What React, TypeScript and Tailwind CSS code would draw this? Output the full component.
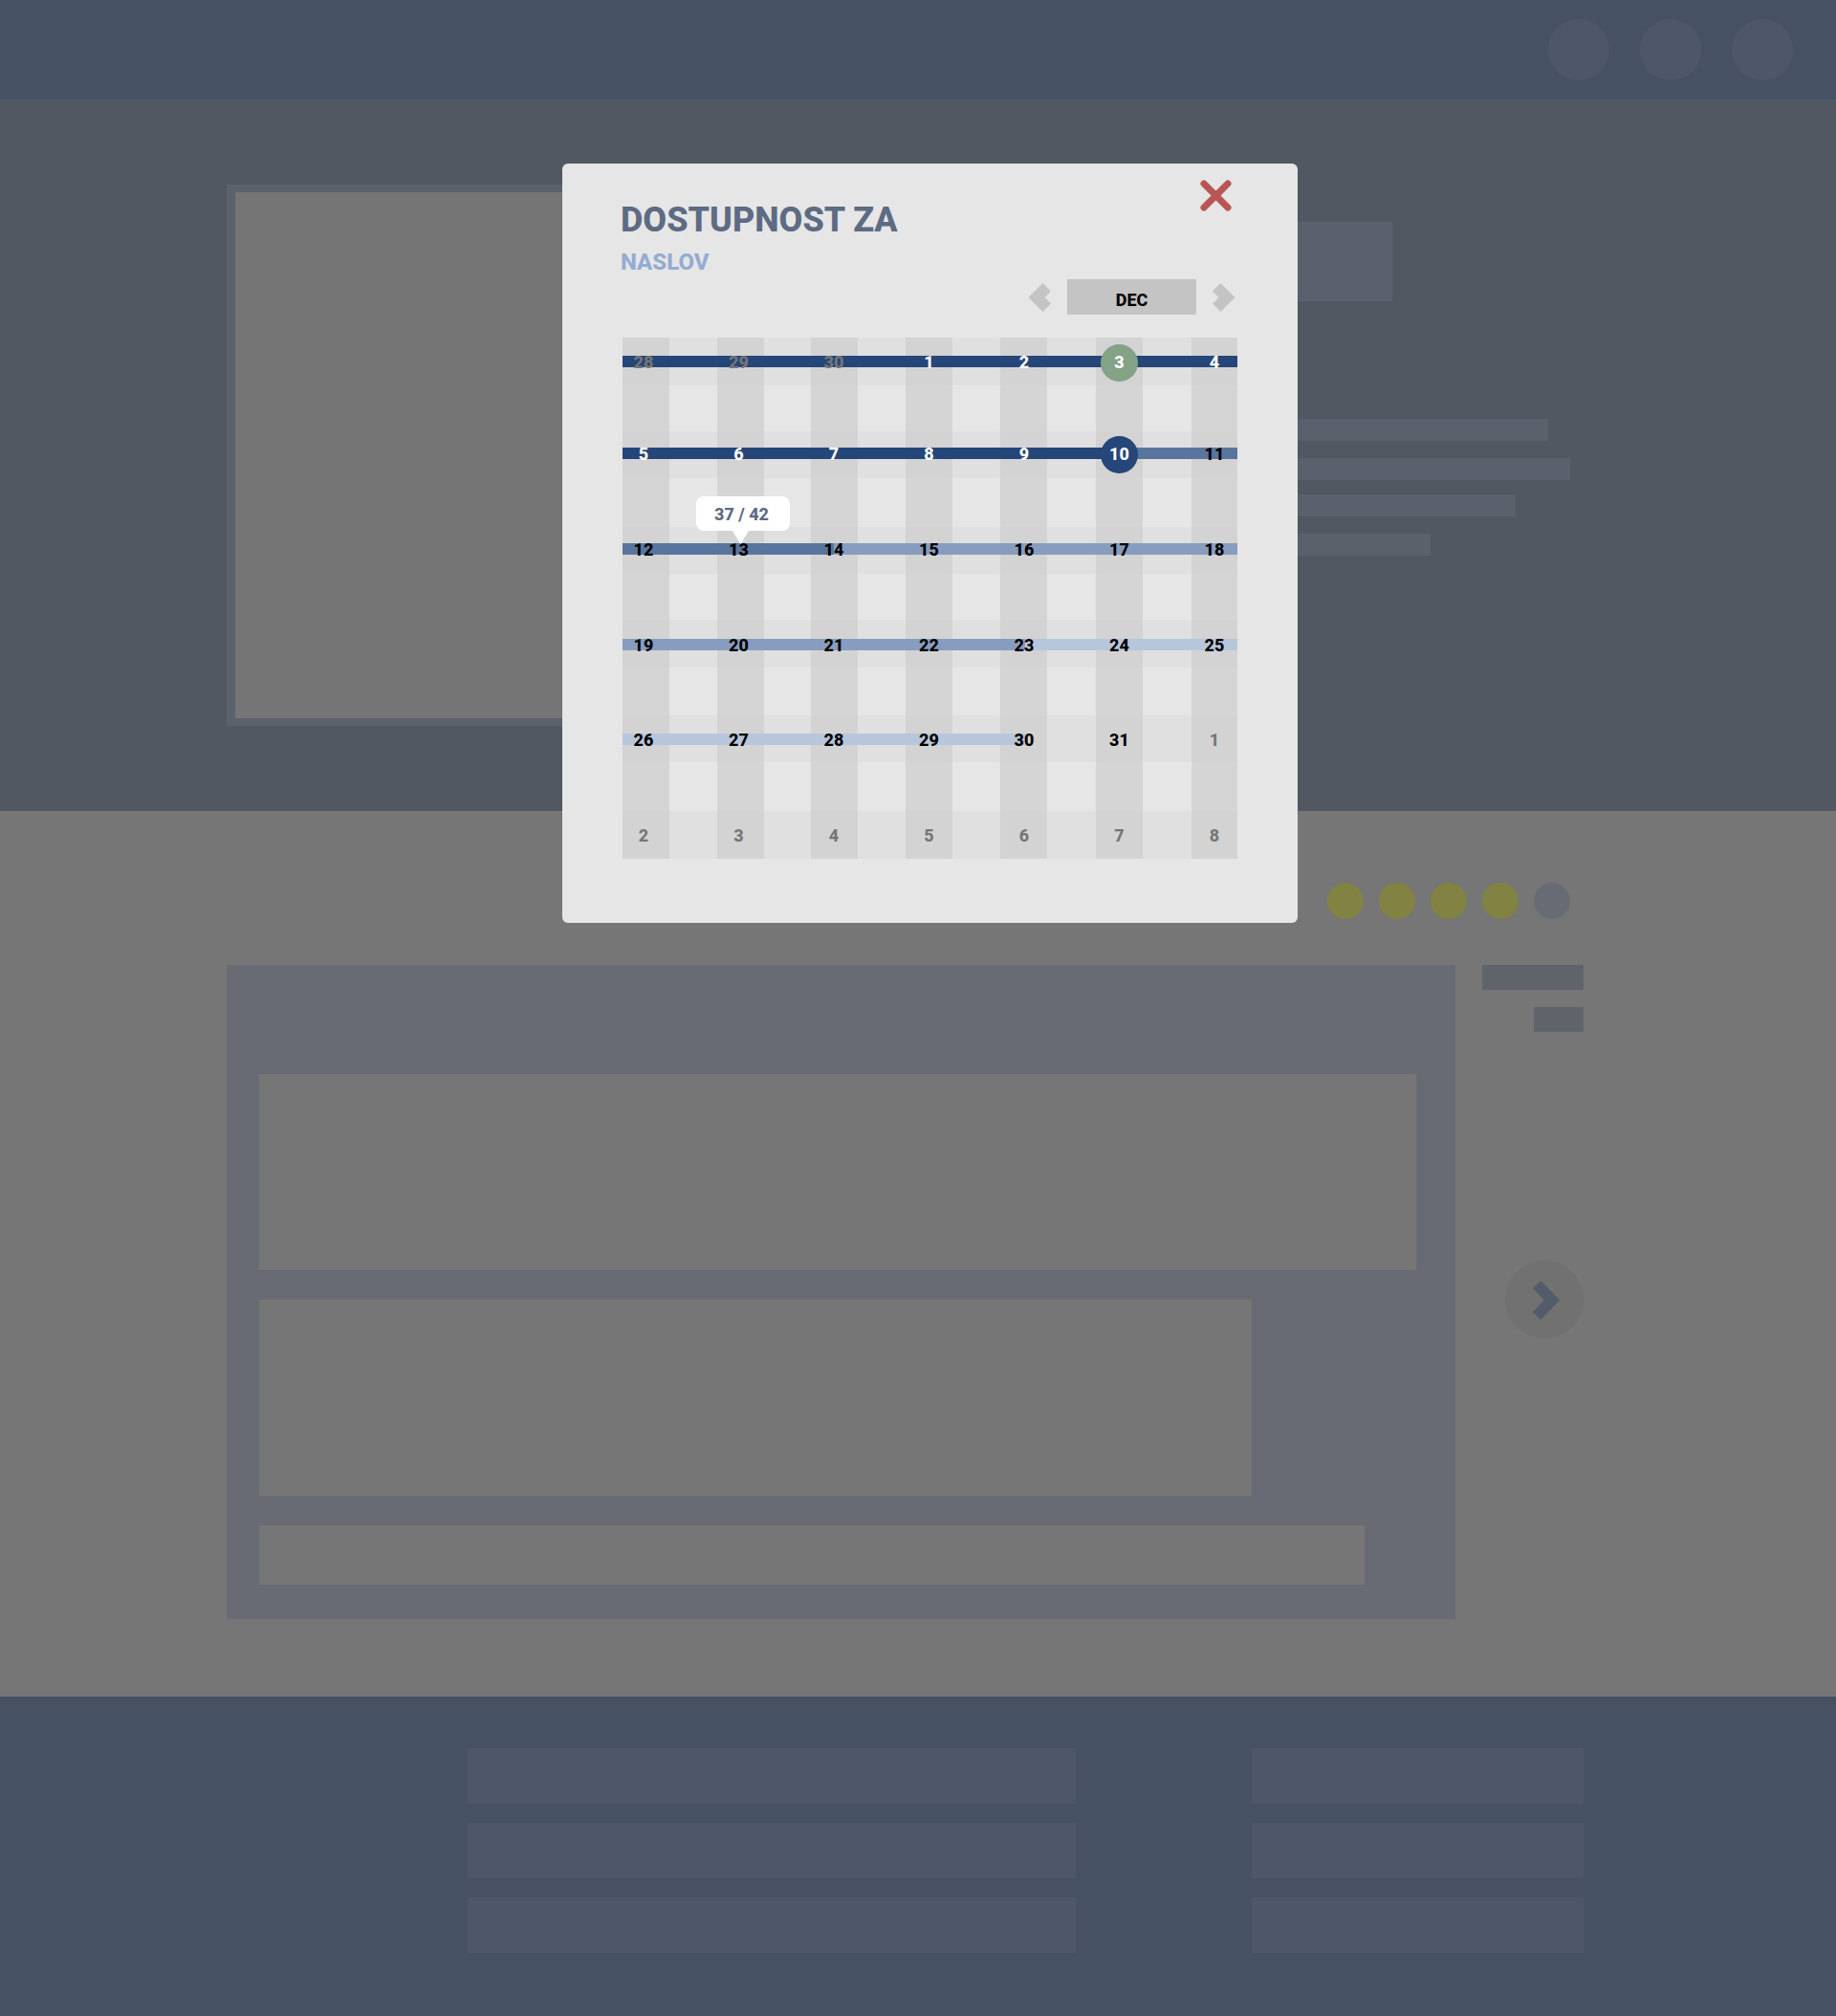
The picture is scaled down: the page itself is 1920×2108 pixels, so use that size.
import React from "react";

type Tone = "muted" | "light" | "dark";
type Day = { label: number; tone: Tone; mark?: "start" | "today"; tip?: string };

const toneClass: Record<Tone, string> = {
  muted: "text-[#767676]",
  light: "text-white",
  dark: "text-black",
};

const markClass = {
  start: "bg-[#84a286]",
  today: "bg-[#254678]",
};

const span = (from: number, to: number, tone: Tone): Day[] =>
  Array.from({ length: to - from + 1 }, (_, i) => ({ label: from + i, tone }));

const weeks: Day[][] = [
  [
    ...span(28, 30, "muted"),
    ...span(1, 2, "light"),
    { label: 3, tone: "light", mark: "start" },
    { label: 4, tone: "light" },
  ],
  [...span(5, 9, "light"), { label: 10, tone: "light", mark: "today" }, { label: 11, tone: "dark" }],
  [{ label: 12, tone: "dark" }, { label: 13, tone: "dark", tip: "37 / 42" }, ...span(14, 18, "dark")],
  span(19, 25, "dark"),
  [...span(26, 31, "dark"), { label: 1, tone: "muted" }],
  span(2, 8, "muted"),
];

// Availability bars, one list per week; widths are percent of the week.
const bars: { color: string; width: number }[][] = [
  [{ color: "bg-[#254678]", width: 100 }],
  [
    { color: "bg-[#254678]", width: 80.7 },
    { color: "bg-[#5a759d]", width: 19.3 },
  ],
  [
    { color: "bg-[#5a759d]", width: 34.4 },
    { color: "bg-[#889cbf]", width: 65.6 },
  ],
  [
    { color: "bg-[#889cbf]", width: 65.4 },
    { color: "bg-[#b8c6dc]", width: 34.6 },
  ],
  [{ color: "bg-[#b8c6dc]", width: 65.4 }],
  [],
];

const weekRows = "grid grid-rows-[96px_100px_100px_99px_100px_50px]";

function Arrow() {
  return (
    <svg width="24" height="30" viewBox="0 0 24 30" fill="#c4c4c4" aria-hidden="true">
      <path d="M8.5 0 23.5 15 8.5 30 0 21.5 6.5 15 0 8.5Z" />
    </svg>
  );
}

function Calendar() {
  return (
    <div className="relative">
      <div
        aria-hidden="true"
        className="absolute inset-0 grid grid-cols-[49fr_50fr_49fr_49fr_49fr_50fr_49fr_50fr_49fr_51fr_49fr_51fr_48fr]"
      >
        {Array.from({ length: 13 }, (_, i) => (
          <div key={i} className={i % 2 === 0 ? "bg-[#d5d5d5]" : ""} />
        ))}
      </div>
      <div
        aria-hidden="true"
        className="absolute inset-0 grid grid-rows-[50px_48px_49px_51px_49px_48px_50px_50px_49px_51px_50px]"
      >
        {Array.from({ length: 11 }, (_, i) => (
          <div key={i} className={i % 2 === 0 ? "bg-[#cbcbcb]/22" : ""} />
        ))}
      </div>
      <div aria-hidden="true" className={`absolute inset-0 ${weekRows}`}>
        {bars.map((week, i) => (
          <div key={i} className="flex h-[50px] items-center">
            {week.map((bar, j) => (
              <div key={j} className={`h-3 ${bar.color}`} style={{ width: `${bar.width}%` }} />
            ))}
          </div>
        ))}
      </div>
      <table className="relative block w-full">
        <tbody className={weekRows}>
          {weeks.map((week, i) => (
            <tr key={i} className="flex h-[52px] items-center justify-between pr-[2px]">
              {week.map((day, j) => (
                <td key={j} className="relative flex w-11 justify-center p-0">
                  <button
                    type="button"
                    className={`flex size-[39px] items-center justify-center rounded-full text-lg font-extrabold ${toneClass[day.tone]} ${day.mark ? markClass[day.mark] : ""}`}
                  >
                    {day.label}
                  </button>
                  {day.tip && (
                    <div
                      role="tooltip"
                      className="absolute bottom-10 left-1/2 ml-[-45px] flex h-9 w-[98px] items-center justify-center rounded-lg bg-white pt-[2px] pr-[2px] text-lg font-extrabold whitespace-nowrap text-[#5d6b83]"
                    >
                      {day.tip}
                      <svg
                        className="absolute top-full left-[38px]"
                        width="17"
                        height="14"
                        viewBox="0 0 17 14"
                        fill="#ffffff"
                        aria-hidden="true"
                      >
                        <path d="M0 0H17L8.5 14Z" />
                      </svg>
                    </div>
                  )}
                </td>
              ))}
            </tr>
          ))}
        </tbody>
      </table>
    </div>
  );
}

function AvailabilityDialog() {
  return (
    <div
      role="dialog"
      aria-modal="true"
      aria-labelledby="dialog-title"
      className="w-full max-w-[769px] rounded-md bg-[#e6e6e6] pt-[17px] pb-[67px]"
    >
      <header className="flex items-start justify-between pr-[69px] pl-[61px]">
        <div className="pt-[22px]">
          <h1 id="dialog-title" className="text-4xl font-extrabold text-[#5d6b83]">
            DOSTUPNOST ZA
          </h1>
          <h2 className="mt-2 text-2xl font-extrabold text-[#95acd2]">NASLOV</h2>
        </div>
        <button type="button" aria-label="Zatvori">
          <svg width="33" height="33" viewBox="0 0 33 33" stroke="#b95555" strokeWidth="7" strokeLinecap="round" aria-hidden="true">
            <path d="M4 4 29 29M29 4 4 29" />
          </svg>
        </button>
      </header>
      <div className="mt-[2px] flex items-center justify-end gap-[17px] pr-[65px]">
        <button type="button" aria-label="Prethodni mesec" className="h-8">
          <span className="block rotate-180">
            <Arrow />
          </span>
        </button>
        <div className="flex h-[37px] w-[135px] items-center justify-center bg-[#c4c4c4] pt-[7px] text-lg font-extrabold text-black">
          DEC
        </div>
        <button type="button" aria-label="Sledeći mesec" className="h-8">
          <span className="block">
            <Arrow />
          </span>
        </button>
      </div>
      <div className="mt-6 px-[63px]">
        <Calendar />
      </div>
    </div>
  );
}

export default function App() {
  return (
    <div className="relative flex min-h-screen flex-col bg-[#767676] font-['Roboto',sans-serif]">
      <header className="flex h-[104px] items-center justify-end gap-8 bg-[#465163] pr-[45px]">
        <div className="size-16 rounded-full bg-[#4d5769]" />
        <div className="size-16 rounded-full bg-[#4d5769]" />
        <div className="size-16 rounded-full bg-[#4d5769]" />
      </header>

      <section className="flex gap-[63px] bg-[#515861] pt-[89px] pr-[264px] pb-[89px] pl-[237px]">
        <div className="h-[566px] w-[560px] border-8 border-l-9 border-[#5b626d] bg-[#757575]" />
        <div className="flex-1 pt-[39px]">
          <div className="h-[83px] w-[596px] bg-[#5b616c]" />
          <div className="mt-[123px] h-[23px] w-[759px] bg-[#5b616c]" />
          <div className="mt-[18px] h-[23px] w-[782px] bg-[#5b616c]" />
          <div className="mt-[15px] h-[23px] w-[725px] bg-[#5b616c]" />
          <div className="mt-[18px] h-[23px] w-[636px] bg-[#5b616c]" />
        </div>
      </section>

      <main className="pt-[75px] pr-[264px] pb-[81px] pl-[237px]">
        <div className="flex justify-end gap-4 pr-[14px]">
          <div className="size-[38px] rounded-full bg-[#828243]" />
          <div className="size-[38px] rounded-full bg-[#828243]" />
          <div className="size-[38px] rounded-full bg-[#828243]" />
          <div className="size-[38px] rounded-full bg-[#828243]" />
          <div className="size-[38px] rounded-full bg-[#686b73]" />
        </div>
        <div className="mt-12 flex gap-7">
          <div className="flex flex-1 flex-col gap-[31px] bg-[#686b73] pt-[114px] pr-[41px] pb-9 pl-[34px]">
            <div className="h-[205px] bg-[#767676]" />
            <div className="h-[205px] max-w-[1038px] bg-[#767676]" />
            <div className="h-[62px] max-w-[1156px] bg-[#767676]" />
          </div>
          <div className="flex w-[106px] flex-col items-end">
            <div className="h-[26px] w-full bg-[#5f646b]" />
            <div className="mt-[18px] h-[26px] w-[52px] bg-[#5f646b]" />
            <button
              type="button"
              aria-label="Sledeće"
              className="mt-[239px] flex size-[82px] items-center justify-center rounded-full bg-[#717171] pl-1"
            >
              <svg width="28" height="41" viewBox="0 0 28 41" fill="#545b6a" aria-hidden="true">
                <path d="M8.3 0 28 20.5 8.3 41 0 33 11.5 20.5 0 8Z" />
              </svg>
            </button>
          </div>
        </div>
      </main>

      <footer className="flex flex-1 gap-[184px] bg-[#465163] pt-[54px] pr-[264px] pb-[66px] pl-[489px]">
        <div className="flex flex-1 flex-col gap-5">
          <div className="h-[58px] bg-[#4d5769]" />
          <div className="h-[58px] bg-[#4d5769]" />
          <div className="h-[58px] bg-[#4d5769]" />
        </div>
        <div className="flex w-[347px] flex-col gap-5">
          <div className="h-[58px] bg-[#4d5769]" />
          <div className="h-[58px] bg-[#4d5769]" />
          <div className="h-[58px] bg-[#4d5769]" />
        </div>
      </footer>

      <div className="absolute inset-0 flex items-start justify-center pt-[171px] pl-[25px]">
        <AvailabilityDialog />
      </div>
    </div>
  );
}
